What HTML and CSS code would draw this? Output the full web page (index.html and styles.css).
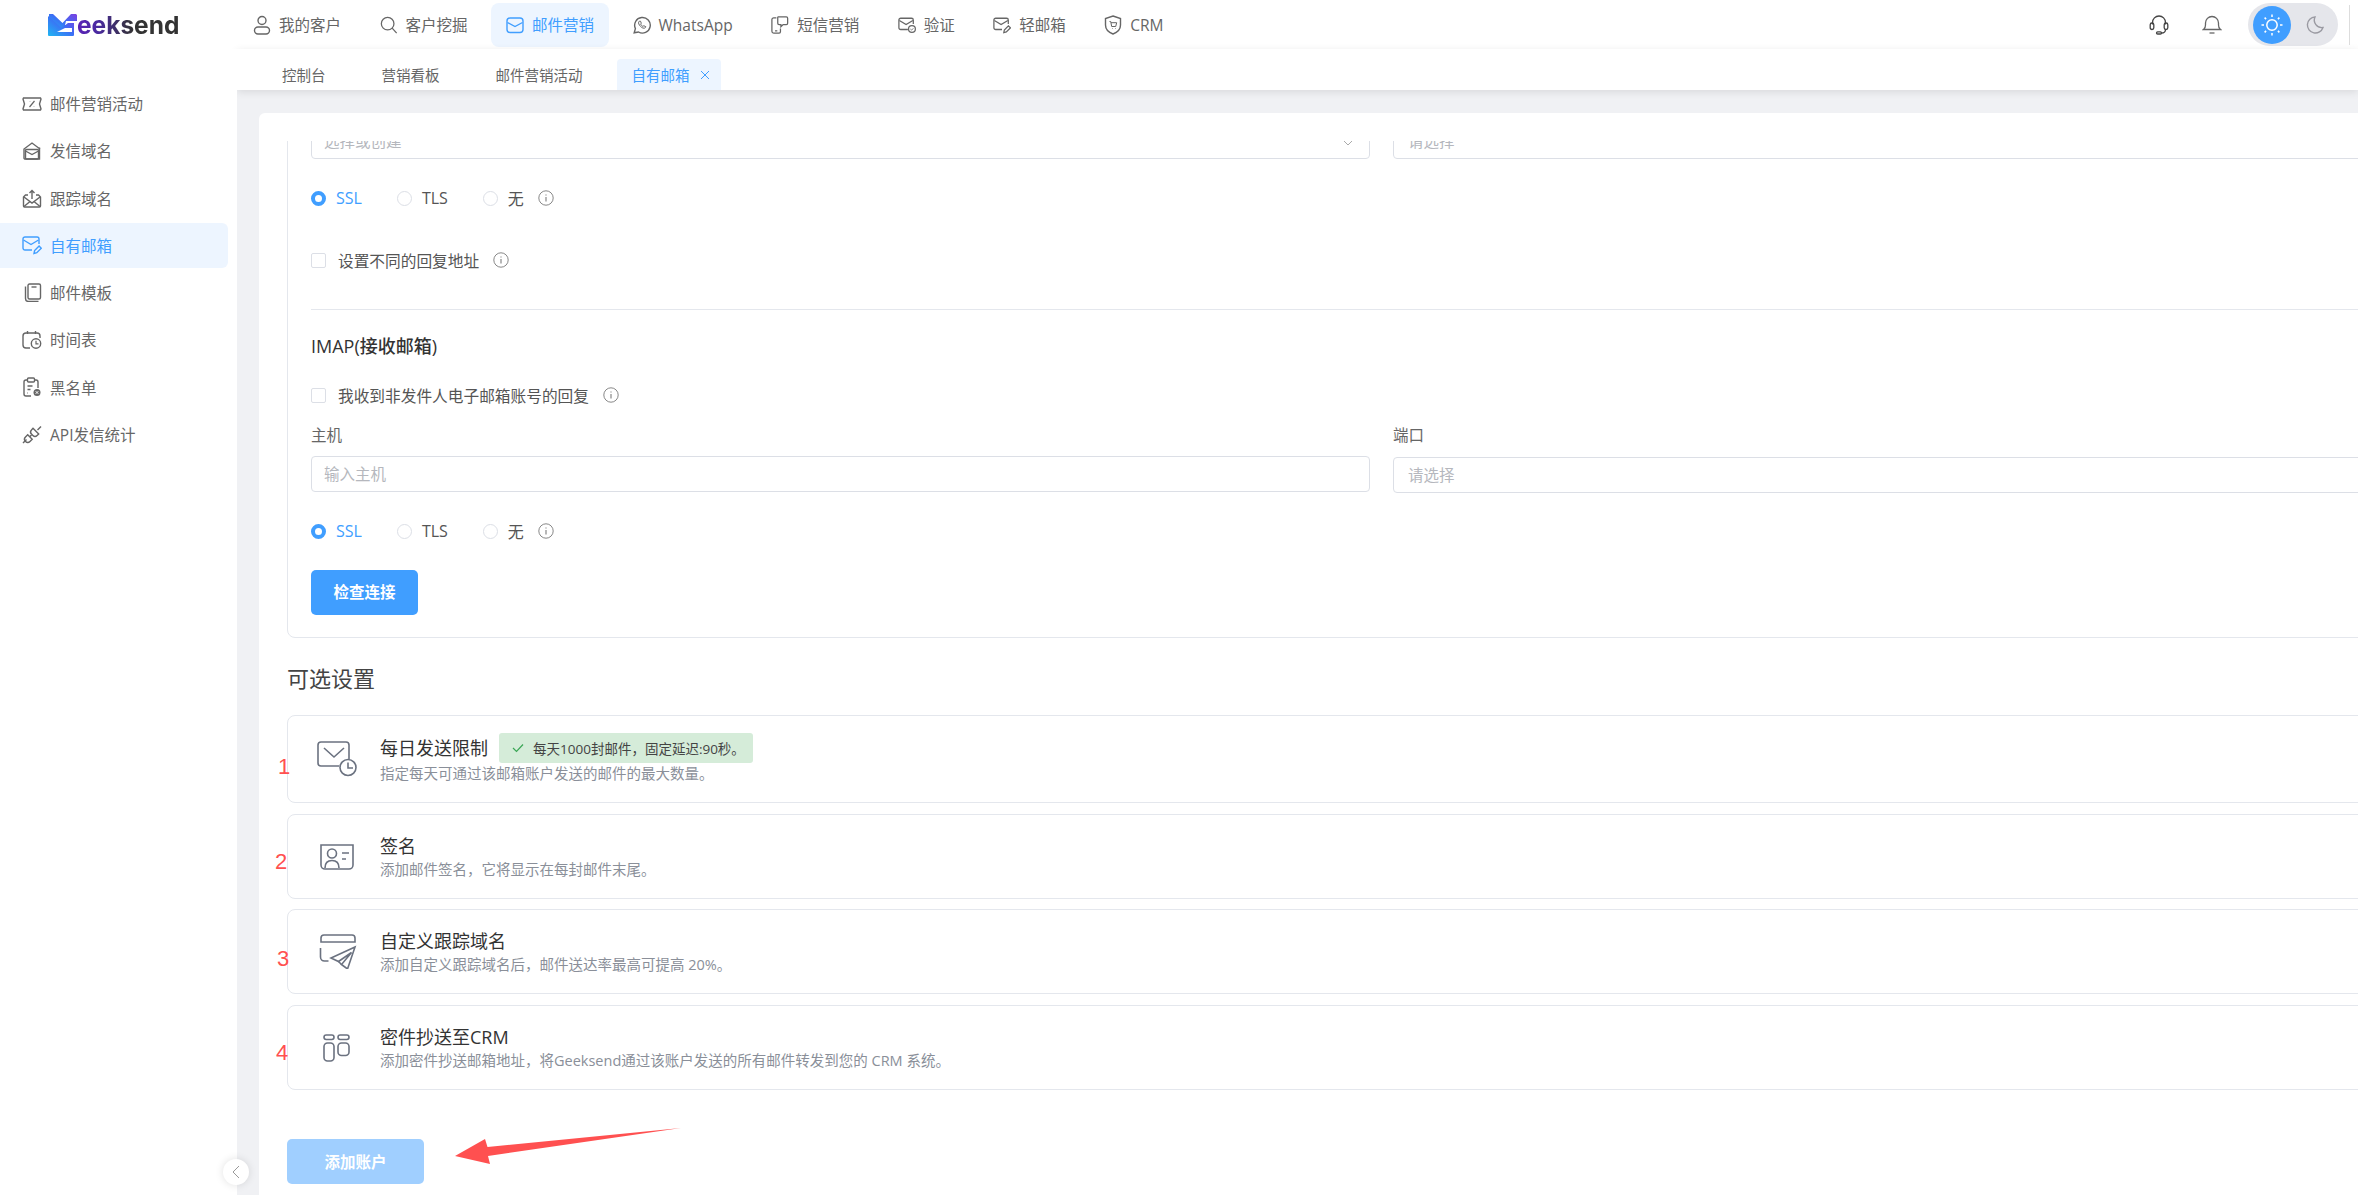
FILE: index.html
```html
<!DOCTYPE html>
<html lang="zh-CN">
<head>
<meta charset="utf-8">
<title>Geeksend</title>
<link rel="stylesheet" href="styles.css">
</head>
<body>
<svg class="defs" width="0" height="0" aria-hidden="true">
  <symbol id="i-info" viewBox="0 0 16 16"><circle cx="8" cy="8" r="7.2" fill="none" stroke="currentColor" stroke-width="1"/><path d="M8 7v4.6M8 4.4v1.2" fill="none" stroke="currentColor" stroke-width="1.2"/></symbol>
</svg>

<header class="topbar">
  <div class="brand">
    <svg class="brand-mark" width="29" height="22" viewBox="0 0 29 22">
      <defs><linearGradient id="lg" x1="0" y1="1" x2="1" y2="0"><stop offset="0" stop-color="#1fb6f2"/><stop offset=".55" stop-color="#3d6cf5"/><stop offset="1" stop-color="#7d3fe0"/></linearGradient></defs>
      <path d="M1 0h4l9.500 9L23 0h5l1 1v6L27 7h-9l-1 4h7v5h-8l-1-1h3l-1 0-4 2L1 5z" fill="url(#lg)"/>
      <path d="M0 2l13.500 12L20 9h6v12a1 1 0 0 1-1 1H1a1 1 0 0 1-1-1z" fill="url(#lg)"/>
      <path d="M17 14h7v4H9l8-4z" fill="#fff"/>
    </svg>
    <span class="brand-name">eeksend</span>
  </div>
  <nav class="mainnav">
    <a class="nav-item"><svg class="ic" viewBox="0 0 18 20"><circle cx="9" cy="5.500" r="4"/><rect x="1.500" y="12" width="15" height="7" rx="3.500"/></svg>我的客户</a>
    <a class="nav-item"><svg class="ic" viewBox="0 0 20 20"><circle cx="8.500" cy="8.500" r="7"/><path d="M13.500 13.500l5 5.500"/></svg>客户挖掘</a>
    <a class="nav-item is-active"><svg class="ic" viewBox="0 0 18 18"><rect x="1" y="2" width="16" height="14.500" rx="3"/><path d="M1.500 6.500L9 10.500l7.500-4"/></svg>邮件营销</a>
    <a class="nav-item"><svg class="ic" viewBox="0 0 18 18"><path d="M1.200 16.800l1.200-4.200A7.800 7.800 0 1 1 5.500 16z"/><path d="M6.300 5.200c-1 .8-1 2.300.2 4 1.200 1.700 2.800 3 4.500 3 .9 0 1.800-.7 1.800-1.500l-2-1-.9.800c-.9-.4-2-1.600-2.300-2.400l.7-.9-.8-2z" stroke-width="1"/></svg>WhatsApp</a>
    <a class="nav-item"><svg class="ic" viewBox="0 0 20 20"><path d="M6 2H3a2 2 0 0 0-2 2v13a2 2 0 0 0 2 2h6a1.500 1.500 0 0 0 1.500-1.500V14"/><path d="M4.500 16.500h2.500"/><path d="M8 1h9a1.500 1.500 0 0 1 1.500 1.500V8A1.500 1.500 0 0 1 17 9.500h-3.500L11 12V9.500H9A1.500 1.500 0 0 1 7.500 8V1.500z"/></svg>短信营销</a>
    <a class="nav-item"><svg class="ic" viewBox="0 0 20 20"><path d="M11 15H3a2 2 0 0 1-2-2V4.500a2 2 0 0 1 2-2h12a2 2 0 0 1 2 2V9"/><path d="M1.500 5l7.500 4.500L16.500 5"/><circle cx="15.500" cy="14.500" r="3.800"/><path d="M13.800 14.500l1.200 1.200 2-2" stroke-width="1"/></svg>验证</a>
    <a class="nav-item"><svg class="ic" viewBox="0 0 20 20"><path d="M10 15H3a2 2 0 0 1-2-2V4.500a2 2 0 0 1 2-2h12a2 2 0 0 1 2 2V9"/><path d="M1.500 5l7.500 4.500L16.500 5"/><path d="M12 18.500l.6-3 4.500-4.500 2.200 2.200-4.500 4.500z"/></svg>轻邮箱</a>
    <a class="nav-item"><svg class="ic" viewBox="0 0 18 20"><path d="M9 1l7.500 2.500V10c0 4.500-3.500 7.500-7.500 9-4-1.500-7.500-4.500-7.500-9V3.500z"/><path d="M5.500 6.500h1.200l1 5h4l1-3.800H7" stroke-width="1"/><path d="M8.500 13.500h.5M11 13.500h.5" stroke-width="1"/></svg>CRM</a>
  </nav>
  <div class="top-tools">
    <svg class="tool" width="20" height="20" viewBox="0 0 20 20"><path d="M3.500 9.500V7.500a6.500 6.500 0 0 1 13 0v2"/><rect x="1.200" y="8" width="3.600" height="6.500" rx="1.800"/><rect x="15.200" y="8" width="3.600" height="6.500" rx="1.800"/><path d="M16.500 14.500c0 2-1.500 3.500-4 3.500"/><rect x="7.500" y="16.800" width="5" height="2.200" rx="1.100"/></svg>
    <svg class="tool tool-bell" width="20" height="20" viewBox="0 0 20 20"><path d="M1.500 14.500c1.500-1 2-2.200 2-4.500V8a6.500 6.500 0 0 1 13 0v2c0 2.300.5 3.500 2 4.500z"/><path d="M7.500 18h5"/></svg>
    <div class="theme-toggle">
      <span class="theme-sun">
        <svg width="24" height="24" viewBox="0 0 24 24"><circle cx="12" cy="12" r="5.200"/><path d="M12 1.500v2.500M12 20v2.500M1.500 12H4M20 12h2.500M4.600 4.600l1.500 1.500M17.900 17.900l1.500 1.500M4.600 19.400l1.500-1.500M17.900 6.100l1.500-1.500"/></svg>
      </span>
      <svg class="theme-moon" width="20" height="20" viewBox="0 0 20 20"><path d="M10 2a8 8 0 1 0 8 10.500A7.500 7.500 0 0 1 10 2z"/></svg>
    </div>
    <span class="top-rule"></span>
  </div>
</header>

<div class="layout">
  <aside class="sidebar">
    <ul class="side-list">
      <li class="side-item"><svg class="ic" width="20" height="14" viewBox="0 0 20 14"><path d="M1.500 1h17l.5 1-1.500 5 1.500 5-.5 1h-17L1 12l1.500-5L1 2z"/><path d="M7.500 10l5-6M7.800 4.500h.4M11.800 9.500h.4" stroke-width="1.200"/></svg>邮件营销活动</li>
      <li class="side-item"><svg class="ic" width="20" height="18" viewBox="0 0 20 18"><path d="M2 16V7l8-6 8 6"/><path d="M17.500 5.500V17H3a1 1 0 0 1-1-1"/><rect x="3.500" y="7.500" width="13" height="9.500" rx="1"/><path d="M3.500 9l6.500 3.500L16.500 9"/></svg>发信域名</li>
      <li class="side-item"><svg class="ic" width="20" height="19" viewBox="0 0 20 19"><path d="M6 6H3.500L1.500 8v9a1 1 0 0 0 1 1h15a1 1 0 0 0 1-1V8l-2-2H14"/><path d="M2 8l8 6 8-6"/><path d="M2 17.500l6-5M18 17.500l-6-5"/><path d="M10 10V1.500M7.500 4L10 1.500 12.500 4"/></svg>跟踪域名</li>
      <li class="side-item is-active"><svg class="ic" width="20" height="19" viewBox="0 0 20 19"><path d="M10 14H3a2 2 0 0 1-2-2V3a2 2 0 0 1 2-2h12a2 2 0 0 1 2 2v5"/><path d="M1.500 4l7.500 4.500L16.500 4"/><path d="M12 17.500l.6-3 4.500-4.500 2.200 2.200-4.500 4.500z"/></svg>自有邮箱</li>
      <li class="side-item"><svg class="ic" width="20" height="19" viewBox="0 0 20 19"><rect x="6" y="1" width="12.500" height="15" rx="1.500"/><path d="M3.500 3.500v12a3 3 0 0 0 3 3h10"/><path d="M9.500 4h5"/></svg>邮件模板</li>
      <li class="side-item"><svg class="ic" width="20" height="19" viewBox="0 0 20 19"><path d="M8 18H4a3 3 0 0 1-3-3V6a3 3 0 0 1 3-3h11a3 3 0 0 1 3 3v2"/><path d="M5.500 1v3M13.500 1v3"/><circle cx="14" cy="13.500" r="4.700"/><path d="M14 10.800v3h2.500" stroke-width="1.200"/></svg>时间表</li>
      <li class="side-item"><svg class="ic" width="20" height="20" viewBox="0 0 20 20"><path d="M9 19H4a2 2 0 0 1-2-2V5a2 2 0 0 1 2-2h1M13 3h1a2 2 0 0 1 2 2v6"/><rect x="5.500" y="1" width="7" height="4" rx="1"/><path d="M5.500 9h5M5.500 12.500h3M5.500 16h.5"/><circle cx="15" cy="15.500" r="3.500" fill="#666" stroke="none"/><path d="M13.700 14.200l2.600 2.600M16.300 14.200l-2.600 2.600" stroke="#fff" stroke-width="1"/></svg>黑名单</li>
      <li class="side-item"><svg class="ic" width="20" height="19" viewBox="0 0 20 19"><path d="M1 18l3.500-3.500"/><path d="M3.500 12a3 3 0 0 0 4.500 4.500l2.200-2.200L5.700 9.800z"/><path d="M7.800 11.800l1.700-1.700"/><path d="M11 3.300l5.700 5.700-1.600 1.500a3 3 0 0 1-4.200 0l-1.400-1.400a3 3 0 0 1 0-4.200z"/><path d="M15.500 5l3.500-3.500"/></svg>API发信统计</li>
    </ul>
    <button class="collapse" type="button" aria-label="收起"><svg width="8" height="14" viewBox="0 0 8 14"><path d="M7 1L1 7l6 6" fill="none" stroke="#999" stroke-width="1"/></svg></button>
  </aside>

  <main class="content">
    <div class="tabs">
      <a class="tab">控制台</a>
      <a class="tab">营销看板</a>
      <a class="tab">邮件营销活动</a>
      <a class="tab is-active">自有邮箱<svg width="10" height="10" viewBox="0 0 10 10"><path d="M1 1l8 8M9 1L1 9" fill="none" stroke="currentColor" stroke-width="1"/></svg></a>
    </div>
    <div class="stage">
      <div class="panel">
        <div class="scroller">
          <section class="server-box">
            <div class="field-grid">
              <div class="input input-select"><span class="ph">选择或创建</span><svg class="chev" width="10" height="6" viewBox="0 0 10 6"><path d="M1 1l4 4 4-4" fill="none" stroke="#aaa" stroke-width="1"/></svg></div>
              <div class="input input-port"><span class="ph">请选择</span></div>
            </div>
            <div class="radio-row radio-row-a">
              <label class="radio is-on"><i></i>SSL</label>
              <label class="radio"><i></i>TLS</label>
              <label class="radio"><i></i>无</label>
              <svg class="info info-tight" width="16" height="16"><use href="#i-info"/></svg>
            </div>
            <div class="check-row check-row-a"><i class="box"></i>设置不同的回复地址<svg class="info" width="16" height="16"><use href="#i-info"/></svg></div>
            <hr class="rule">
            <h3 class="sub-title">IMAP(接收邮箱)</h3>
            <div class="check-row check-row-b"><i class="box"></i>我收到非发件人电子邮箱账号的回复<svg class="info" width="16" height="16"><use href="#i-info"/></svg></div>
            <div class="field-grid field-labels">
              <label class="lbl">主机</label>
              <label class="lbl">端口</label>
            </div>
            <div class="field-grid field-inputs">
              <div class="input"><span class="ph">输入主机</span></div>
              <div class="input input-port input-low"><span class="ph">请选择</span></div>
            </div>
            <div class="radio-row radio-row-b">
              <label class="radio is-on"><i></i>SSL</label>
              <label class="radio"><i></i>TLS</label>
              <label class="radio"><i></i>无</label>
              <svg class="info info-tight" width="16" height="16"><use href="#i-info"/></svg>
            </div>
            <button class="btn btn-check" type="button">检查连接</button>
          </section>

          <h2 class="section-title">可选设置</h2>

          <div class="opt-list">
            <article class="opt opt-tagged">
              <svg class="ic opt-ic" width="40" height="36" viewBox="0 0 40 36"><path d="M22 25H4a3 3 0 0 1-3-3V4a3 3 0 0 1 3-3h25a3 3 0 0 1 3 3v14"/><path d="M7 7l10 9 10-9"/><circle cx="31" cy="26.500" r="8"/><path d="M31 21.500v5.500h5"/></svg>
              <div class="opt-text">
                <div class="opt-head"><h4>每日发送限制</h4><span class="tag"><svg width="12" height="10" viewBox="0 0 12 10"><path d="M1 5l3.500 3.500L11 1.500" fill="none" stroke="#3aa655" stroke-width="1.200"/></svg>每天1000封邮件，固定延迟:90秒。</span></div>
                <p>指定每天可通过该邮箱账户发送的邮件的最大数量。</p>
              </div>
            </article>
            <article class="opt">
              <svg class="ic opt-ic" width="40" height="26" viewBox="0 0 40 26"><path d="M4 1h32v20a4 4 0 0 1-4 4H8a4 4 0 0 1-4-4z"/><circle cx="15" cy="9.500" r="4.500"/><path d="M8 24c0-5 3-7.500 7-7.500s7 2.500 7 7.500"/><path d="M25 9h7M25 15h4"/></svg>
              <div class="opt-text">
                <div class="opt-head"><h4>签名</h4></div>
                <p>添加邮件签名，它将显示在每封邮件末尾。</p>
              </div>
            </article>
            <article class="opt opt-snug">
              <svg class="ic opt-ic" width="40" height="35" viewBox="0 0 40 35"><path d="M4 8V4a3 3 0 0 1 3-3h28a3 3 0 0 1 3 3v4z"/><path d="M3.500 14v9a4 4 0 0 0 4 4h4"/><path d="M38 13L14 24l7.500 3.500 13-9-10 12 6 4.500z"/><path d="M21.500 27.500l3 3"/></svg>
              <div class="opt-text">
                <div class="opt-head"><h4>自定义跟踪域名</h4></div>
                <p>添加自定义跟踪域名后，邮件送达率最高可提高 20%。</p>
              </div>
            </article>
            <article class="opt">
              <svg class="ic opt-ic" width="40" height="28" viewBox="0 0 40 28"><rect x="7" y="1" width="10" height="4.500" rx="2.200"/><rect x="21" y="1" width="11" height="4.500" rx="2.200"/><rect x="7" y="9" width="10" height="18" rx="3.500"/><rect x="21" y="9" width="11" height="12.500" rx="3.500"/></svg>
              <div class="opt-text">
                <div class="opt-head"><h4>密件抄送至CRM</h4></div>
                <p>添加密件抄送邮箱地址，将Geeksend通过该账户发送的所有邮件转发到您的 CRM 系统。</p>
              </div>
            </article>
          </div>

          <button class="btn btn-add" type="button">添加账户</button>
        </div>
      </div>
    </div>
  </main>
</div>

<span class="mark mark-1">1</span>
<span class="mark mark-2">2</span>
<span class="mark mark-3">3</span>
<span class="mark mark-4">4</span>
<svg class="arrow" width="240" height="50" viewBox="0 0 240 50"><path d="M0 28L30 11l2.500 8L226 0 33 28l2 8z" fill="#ff5050"/></svg>
</body>
</html>
```

FILE: styles.css
```css
* { box-sizing: border-box; }
html, body { margin: 0; height: 1195px; overflow: hidden; background: #fff; }
body {
  position: relative;
  font-family: "Open Sans", "Noto Sans CJK SC", sans-serif;
  font-size: 16px;
  color: #666;
}
.defs { position: absolute; }
ul { list-style: none; margin: 0; padding: 0; }
a { color: inherit; text-decoration: none; }
h2, h3, h4, p { margin: 0; font-weight: 400; }
.ic { fill: none; stroke: currentColor; stroke-width: 1.4; flex: none; }

.topbar { display: flex; align-items: center; height: 49px; background: #fff; }
.brand { display: flex; align-items: center; width: 238px; padding-left: 48px; flex: none; }
.brand-mark { flex: none; }
.brand-name {
  font-family: Inter, sans-serif;
  font-weight: 700;
  font-size: 24.500px;
  line-height: 30px;
  background: linear-gradient(90deg, #5a22b8 0, #4a2aa0 20%, #333 55%, #333 100%);
  -webkit-background-clip: text;
  background-clip: text;
  color: transparent;
}
.mainnav { display: flex; gap: 8.500px; align-items: center; }
.nav-item {
  display: flex; align-items: center; gap: 8px;
  height: 44px; padding: 0 15px; border-radius: 8px;
  font-size: 15.500px; color: #666; white-space: nowrap;
}
.nav-item .ic { width: 18px; height: 20px; }
.nav-item.is-active { background: #edf5ff; color: #409eff; }
.top-tools { display: flex; align-items: center; margin-left: auto; height: 49px; }
.tool { fill: none; stroke: #444; stroke-width: 1.300; }
.tool-bell { margin-left: 33px; stroke: #666; }
.theme-toggle {
  display: flex; align-items: center; width: 90px; height: 43px;
  margin-left: 26px; padding-left: 5px; border-radius: 22px; background: #e5e6eb;
}
.theme-sun {
  display: flex; align-items: center; justify-content: center;
  width: 38px; height: 38px; border-radius: 50%; background: #409eff;
  fill: none; stroke: #fff; stroke-width: 1.500;
}
.theme-moon { margin-left: 14px; fill: none; stroke: #9a9aa2; stroke-width: 1.400; }
.top-rule { width: 1px; height: 40px; margin: 0 8px 0 11px; background: #ddd; }

.layout { display: flex; height: 1146px; }
.sidebar { position: relative; z-index: 2; width: 237px; flex: none; background: #fff; padding-top: 32px; }
.side-list { display: flex; flex-direction: column; gap: 2.300px; width: 228px; }
.side-item {
  display: flex; align-items: center; gap: 8px;
  height: 45px; padding-left: 22px; border-radius: 0 6px 6px 0;
  font-size: 15.500px; color: #666;
}
.side-item.is-active { background: #edf5ff; color: #409eff; }
.collapse {
  position: absolute; left: 223px; top: 1110px;
  display: flex; align-items: center; justify-content: center;
  width: 26px; height: 26px; padding: 0; border: 0; border-radius: 50%;
  background: #fff; box-shadow: 0 0 8px rgba(0,0,0,.12);
}

.content { flex: 1; min-width: 0; display: flex; flex-direction: column; }
.tabs {
  position: relative; z-index: 1;
  display: flex; align-items: flex-end; height: 41px; padding-left: 17px;
  background: #fff; box-shadow: 0 2px 8px rgba(0,0,0,.10);
}
.tab { display: flex; align-items: center; height: 31px; padding: 0 28px; font-size: 14.500px; color: #666; white-space: nowrap; }
.tab.is-active {
  gap: 10px; margin-left: 6px; padding: 0 11px 0 15px;
  border-radius: 4px 4px 0 0; background: #edf5ff; color: #409eff;
}
.stage { flex: 1; min-height: 0; padding: 23px 0 0 22px; background: #f0f1f4; }
.panel { height: 100%; padding-top: 28px; background: #fff; border-radius: 6px 0 0 0; overflow: hidden; }
.scroller { height: 100%; overflow: hidden; padding-left: 28px; width: 2300px; }

.server-box {
  margin-top: -19px; padding: 0 0 22px 23px;
  border: 1px solid #e4e7ed; border-radius: 8px;
}
.field-grid { display: grid; grid-template-columns: 1059px 1059px; column-gap: 23px; }
.input {
  position: relative; display: flex; align-items: center;
  height: 36px; padding: 0 11px 0 12px;
  border: 1px solid #dcdfe6; border-radius: 4px; background: #fff;
}
.input-port { padding-left: 14px; }
.input-low { top: 1px; }
.ph { color: #b5b7bd; font-size: 15.500px; line-height: 20px; }
.chev { position: absolute; right: 16px; top: 16px; }
.radio-row { display: flex; align-items: center; height: 20px; gap: 35px; font-size: 16px; color: #555; }
.radio-row-a { margin-top: 29px; }
.radio-row-b { margin-top: 29px; }
.radio { display: flex; align-items: center; gap: 10px; }
.radio i { width: 15px; height: 15px; border: 1px solid #dcdfe6; border-radius: 50%; background: #fff; }
.radio.is-on { color: #409eff; }
.radio.is-on i { border: 4.500px solid #409eff; }
.info { flex: none; margin-left: 14px; color: #888; }
.info-tight { margin-left: -21px; }
.check-row { display: flex; align-items: center; height: 20px; font-size: 15.700px; color: #555; }
.check-row-a { margin-top: 42px; }
.check-row-b { margin-top: 27px; }
.box { width: 15px; height: 15px; margin-right: 12px; border: 1px solid #dcdfe6; border-radius: 2px; background: #fff; flex: none; }
.rule { height: 1px; margin: 39px 0 0; border: 0; background: #e4e7ed; }
.sub-title { margin-top: 24px; height: 24px; font-size: 18px; line-height: 24px; font-weight: 500; color: #333; white-space: nowrap; }
.field-labels { margin-top: 20px; }
.lbl { display: block; height: 20px; font-size: 15.500px; line-height: 20px; color: #666; }
.field-inputs { margin-top: 11px; }
.btn {
  display: block; border: 0; padding: 0; border-radius: 5px; color: #fff;
  font: 600 15.500px "Open Sans", "Noto Sans CJK SC", sans-serif;
}
.btn-check { width: 107px; height: 45px; margin-top: 29px; padding-bottom: 3px; background: #409eff; }
.section-title { height: 30px; margin-top: 25px; font-size: 22px; line-height: 30px; color: #444; }
.opt-list { display: flex; flex-direction: column; gap: 11px; margin-top: 22px; }
.opt {
  display: flex; align-items: center; height: 85px; padding: 0 0 0 29px;
  border: 1px solid #e4e7ed; border-radius: 8px;
}
.opt-tagged { height: 88px; }
.opt-snug { margin-top: -1px; }
.opt-ic { color: #6b7280; margin-right: 23px; stroke-width: 1.600; }
.opt-head { display: flex; align-items: center; gap: 11px; min-height: 26px; }
.opt-tagged .opt-head { min-height: 30px; }
.opt-head h4 { font-size: 18px; line-height: 26px; color: #333; }
.opt-text p { font-size: 14.500px; line-height: 22px; color: #8a8f99; white-space: nowrap; }
.tag {
  display: flex; align-items: center; gap: 9px; height: 30px; padding: 0 8px 0 13px;
  border-radius: 3px; background: #d5ecd9; font-size: 13.500px; color: #444;
}
.btn-add { width: 137px; height: 45px; margin-top: 49px; background: #a0cfff; }

.mark { position: absolute; z-index: 5; font-family: "Liberation Sans", sans-serif; font-size: 22px; line-height: 24px; color: #ff5050; }
.mark-1 { left: 278px; top: 755px; }
.mark-2 { left: 275px; top: 850px; }
.mark-3 { left: 277px; top: 947px; }
.mark-4 { left: 276px; top: 1041px; }
.arrow { position: absolute; z-index: 5; left: 455px; top: 1128px; }
```
